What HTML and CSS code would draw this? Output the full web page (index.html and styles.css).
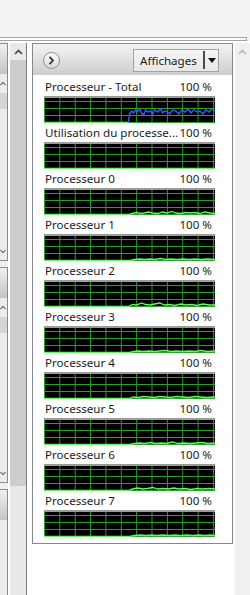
FILE: index.html
```html
<html>
    <head>
        <link rel="stylesheet" href="styles.css">
    </head>
    <body>
        <div class="top">
            <div class="splitter"></div>
        </div>
        <div class="main">
            <div class="side">
                <div class="sbox">
                    <div class="shead"></div>
                    <div class="sbtn"><svg width="8" height="5" viewBox="0 0 8 5"><polyline points="0.5,4.5 4,1 7.5,4.5" fill="none" stroke="#555" stroke-width="1.4"/></svg></div>
                    <div class="sthumb"></div>
                    <div class="sfill"></div>
                    <div class="sbtn"><svg width="8" height="5" viewBox="0 0 8 5"><polyline points="0.5,0.5 4,4 7.5,0.5" fill="none" stroke="#555" stroke-width="1.4"/></svg></div>
                </div>
                <div class="sbox">
                    <div class="shead"></div>
                    <div class="sbtn"><svg width="8" height="5" viewBox="0 0 8 5"><polyline points="0.5,4.5 4,1 7.5,4.5" fill="none" stroke="#555" stroke-width="1.4"/></svg></div>
                    <div class="sthumb"></div>
                    <div class="sfill"></div>
                    <div class="sbtn"><svg width="8" height="5" viewBox="0 0 8 5"><polyline points="0.5,0.5 4,4 7.5,0.5" fill="none" stroke="#555" stroke-width="1.4"/></svg></div>
                </div>
                <div class="sbox last">
                    <div class="shead"></div>
                    <div class="sfill"></div>
                </div>
            </div>

            <div class="vscroll">
                <div class="vbtn"><svg width="9" height="6" viewBox="0 0 9 6"><polyline points="1,5 4.5,1.5 8,5" fill="none" stroke="#444" stroke-width="1.6"/></svg></div>
                <div class="vthumb"></div>
            </div>

            <div class="content">
                <div class="panel">
                    <div class="phead">
                        <div class="circle">
                            <svg width="17" height="17" viewBox="0 0 17 17"><polyline points="6.5,4.8 10,8.5 6.5,12.2" fill="none" stroke="#333" stroke-width="1.8"/></svg>
                        </div>
                        <div class="views">
                            <span>Affichages</span>
                            <i class="sep"></i>
                            <svg width="8" height="5" viewBox="0 0 8 5"><polygon points="0,0 8,0 4,5" fill="#111"/></svg>
                        </div>
                    </div>

                    <div class="list">
                        <div class="item">
                            <div class="label"><span>Processeur - Total</span><span>100 %</span></div>
                            <div class="graph">
                                <svg viewBox="0 0 170 25" preserveAspectRatio="none">
                                    <polyline class="g" points="0,24.5 84,24.5"/>
                                    <polyline class="b" points="84,24.5 85,16 87,13 89,15 91,12 93,14 95,11 97,15 99,17 101,12 103,14 106,13 108,16 110,12 113,14 116,11 118,15 120,13 123,14 125,16 128,12 131,13 134,16 137,12 140,14 143,11 146,15 149,12 152,14 155,13 158,16 161,12 164,14 167,11 170,13"/>
                                </svg>
                            </div>
                        </div>
                        <div class="item">
                            <div class="label"><span>Utilisation du processe...</span><span>100 %</span></div>
                            <div class="graph">
                                <svg viewBox="0 0 170 25" preserveAspectRatio="none">
                                    <polyline class="g" points="0,24.5 170,24.5"/>
                                </svg>
                            </div>
                        </div>
                        <div class="item">
                            <div class="label"><span>Processeur 0</span><span>100 %</span></div>
                            <div class="graph">
                                <svg viewBox="0 0 170 25" preserveAspectRatio="none">
                                    <polyline class="g" points="0,24.5 84,24.5 88,23.5 92,22.5 96,23.5 100,23 104,22 108,23 113,23.5 118,22 122,23 127,21.5 131,23 136,23.5 141,22.5 146,23 150,22.5 155,23.5 160,22 165,23 170,23.5"/>
                                </svg>
                            </div>
                        </div>
                        <div class="item">
                            <div class="label"><span>Processeur 1</span><span>100 %</span></div>
                            <div class="graph">
                                <svg viewBox="0 0 170 25" preserveAspectRatio="none">
                                    <polyline class="g" points="0,24.5 86,24.5 90,23.5 95,23 100,23.5 105,23 110,23.5 116,22.5 121,23.5 126,23 132,23.5 138,23 144,23.5 150,23 156,23.5 162,23 170,23.5"/>
                                </svg>
                            </div>
                        </div>
                        <div class="item">
                            <div class="label"><span>Processeur 2</span><span>100 %</span></div>
                            <div class="graph">
                                <svg viewBox="0 0 170 25" preserveAspectRatio="none">
                                    <polyline class="g" points="0,24.5 84,24.5 88,22.5 92,23 97,21 101,22.5 105,23 110,22 115,21 120,23 125,22.5 130,23.5 136,22 141,23 147,22.5 152,23.5 158,22 164,23 170,23"/>
                                </svg>
                            </div>
                        </div>
                        <div class="item">
                            <div class="label"><span>Processeur 3</span><span>100 %</span></div>
                            <div class="graph">
                                <svg viewBox="0 0 170 25" preserveAspectRatio="none">
                                    <polyline class="g" points="0,24.5 85,24.5 89,23.5 94,23 99,23.5 104,23 110,23.5 115,23 121,22.5 126,23.5 132,23 138,23.5 144,23 150,23.5 156,22.5 162,23.5 170,23"/>
                                </svg>
                            </div>
                        </div>
                        <div class="item">
                            <div class="label"><span>Processeur 4</span><span>100 %</span></div>
                            <div class="graph">
                                <svg viewBox="0 0 170 25" preserveAspectRatio="none">
                                    <polyline class="g" points="0,24.5 84,24.5 89,23 94,23.5 99,22.5 104,23 110,23.5 115,22.5 121,23 126,23.5 132,22.5 138,23 144,23.5 150,22.5 156,23 162,23.5 170,23"/>
                                </svg>
                            </div>
                        </div>
                        <div class="item">
                            <div class="label"><span>Processeur 5</span><span>100 %</span></div>
                            <div class="graph">
                                <svg viewBox="0 0 170 25" preserveAspectRatio="none">
                                    <polyline class="g" points="0,24.5 85,24.5 90,23.5 95,23 100,23.5 106,22.5 111,23.5 117,23 122,23.5 128,22 133,23.5 139,23 145,23.5 151,23 157,22.5 163,23.5 170,23"/>
                                </svg>
                            </div>
                        </div>
                        <div class="item">
                            <div class="label"><span>Processeur 6</span><span>100 %</span></div>
                            <div class="graph">
                                <svg viewBox="0 0 170 25" preserveAspectRatio="none">
                                    <polyline class="g" points="0,24.5 84,24.5 88,23 93,22 98,23 103,22.5 108,21.5 113,23 118,22.5 124,23 129,22 134,23 140,22.5 146,23.5 152,22.5 158,23 164,22.5 170,23"/>
                                </svg>
                            </div>
                        </div>
                        <div class="item">
                            <div class="label"><span>Processeur 7</span><span>100 %</span></div>
                            <div class="graph">
                                <svg viewBox="0 0 170 25" preserveAspectRatio="none">
                                    <polyline class="g" points="0,24.5 85,24.5 90,23.5 96,23 101,23.5 107,23 112,23.5 118,23 124,23.5 130,23 136,23.5 142,23 148,23.5 154,23 160,23.5 166,23 170,23.5"/>
                                </svg>
                            </div>
                        </div>
                    </div>
                </div>
            </div>

            <div class="rscroll">
                <div class="vbtn"><svg width="9" height="6" viewBox="0 0 9 6"><polyline points="1,5 4.5,1.5 8,5" fill="none" stroke="#b5b5b5" stroke-width="1.6"/></svg></div>
            </div>
        </div>
    </body>
</html>
```

FILE: styles.css
```css
body, html {
    margin: 0;
    height: 100%;
    overflow: hidden;
}
body {
    background: #fff;
    font-family: "Noto Sans", "DejaVu Sans", sans-serif;
    font-size: 11.6px;
    color: #1a1a1a;
}
.top {
    height: 41px;
    padding-top: 37px;
    box-sizing: border-box;
    background: #f3f3f3;
}
.splitter {
    width: 247px;
    height: 4px;
    box-sizing: border-box;
    border: 1px solid #a5a5a5;
    border-left: none;
    background: #fbfbfb;
}
.main {
    display: flex;
    height: 554px;
}

/* cut off panels on the left */
.side {
    width: 8px;
    display: flex;
    flex-direction: column;
    gap: 6px;
    padding-top: 2px;
    background: #f0f0f0;
}
.sbox {
    display: flex;
    flex-direction: column;
    height: 218px;
    box-sizing: border-box;
    border: 1px solid #8a8a8a;
    border-left: none;
    background: #ececec;
}
.sbox + .sbox {
    height: 216px;
}
.sbox.last {
    flex: 1;
    border-bottom: none;
}
.shead {
    height: 30px;
    background: linear-gradient(#f0f0f0, #c4c4c4);
}
.sbtn {
    height: 18px;
    display: flex;
    align-items: center;
    justify-content: flex-end;
    overflow: hidden;
}
.sbtn svg {
    margin-right: 1px;
}
.sthumb {
    height: 16px;
    margin-top: 1px;
    background: #d5d5d5;
}
.sfill {
    flex: 1;
}

.vscroll {
    width: 16px;
    margin: 2px 0 0 2px;
    border-right: 1px solid #7a7a7a;
    background: #e9e9e9;
}
.vbtn {
    height: 17px;
    display: flex;
    align-items: center;
    justify-content: center;
}
.vthumb {
    height: 426px;
    background: #cdcdcd;
}

.content {
    flex: 1;
    padding: 2px 2px 0 5px;
    background: #fff;
}
.panel {
    width: 201px;
    height: 501px;
    box-sizing: border-box;
    border: 1px solid #828790;
}
.phead {
    height: 31px;
    display: flex;
    align-items: center;
    justify-content: space-between;
    padding: 0 13px 0 10px;
    background: linear-gradient(#f4f4f4, #cdcdcd);
}
.circle {
    width: 17px;
    height: 17px;
    box-sizing: border-box;
    border: 1px solid #8c8c8c;
    border-radius: 50%;
    background: linear-gradient(#fdfdfd, #d9d9d9);
    display: flex;
    align-items: center;
    justify-content: center;
    margin-top: 1px;
}
.circle svg {
    flex: none;
}
.views {
    width: 86px;
    height: 23px;
    box-sizing: border-box;
    border: 1px solid #a3a3a3;
    background: linear-gradient(#f6f6f6, #e7e7e7);
    display: flex;
    align-items: center;
    padding: 0 2px 0 6px;
    margin-top: 1px;
}
.views .sep {
    width: 2px;
    height: 18px;
    background: #4a4a4a;
    margin: 0 3px 0 auto;
}

.list {
    padding: 2px 17px 0 11px;
}
.item {
    height: 46px;
}
.label {
    height: 19px;
    display: flex;
    align-items: center;
    justify-content: space-between;
    padding: 0 3px 0 1px;
    white-space: nowrap;
}
.graph {
    height: 27px;
    box-sizing: border-box;
    border-top: 2px solid #9b9b9b;
    background-color: #000;
    background-image:
        linear-gradient(90deg, #2aa02a 1px, transparent 1px),
        linear-gradient(to top, #2aa02a 1px, transparent 1px);
    background-size: 15.36px 100%, 100% 7px;
    background-position: 0 0, 0 100%;
}
.graph svg {
    display: block;
    width: 100%;
    height: 100%;
}
.graph .g {
    fill: none;
    stroke: #6ef26e;
    stroke-width: 1.3;
}
.graph .b {
    fill: none;
    stroke: #3a5cff;
    stroke-width: 1.4;
}

.rscroll {
    width: 15px;
    margin-top: 2px;
    background: #f0f0f0;
}
```
